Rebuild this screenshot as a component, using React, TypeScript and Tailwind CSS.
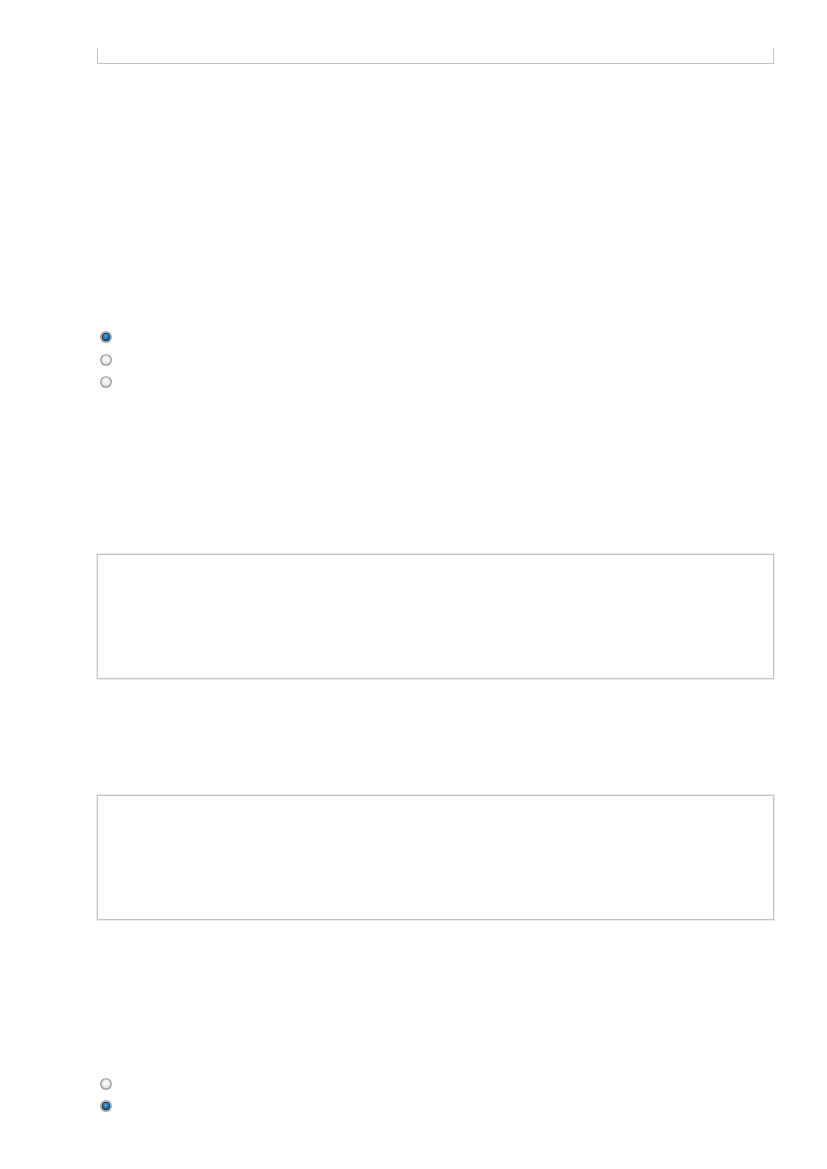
import React from 'react';

const Radio: React.FC<{ checked?: boolean }> = ({ checked }) => (
  <svg width="12" height="12" viewBox="0 0 12 12" className="block">
    <defs>
      <radialGradient id="rgOff" cx="50%" cy="40%" r="60%">
        <stop offset="0%" stopColor="#ffffff" />
        <stop offset="100%" stopColor="#d6d6d6" />
      </radialGradient>
      <radialGradient id="rgOn" cx="45%" cy="35%" r="60%">
        <stop offset="0%" stopColor="#4aa8e6" />
        <stop offset="100%" stopColor="#0a5b94" />
      </radialGradient>
    </defs>
    <circle cx="6" cy="6" r="5.3" fill="url(#rgOff)" stroke="#8e8e8e" strokeWidth="1.1" />
    {checked && <circle cx="6" cy="6" r="3.7" fill="url(#rgOn)" stroke="#0f3550" strokeWidth="1.1" />}
  </svg>
);

const Box: React.FC<{ className: string }> = ({ className }) => (
  <div className={`w-[677px] border border-[#c4c4c4] shadow-[0_0_0_1px_#ececec] ${className}`} />
);

export default function App() {
  return (
    <div className="w-[827px] min-h-[1169px] bg-white pl-[97px] flex flex-col">
      {/* tail of a box from the previous page */}
      <div className="mt-[48px] h-[16px] w-[677px] border-x border-b border-[#c4c4c4]" />

      <div className="mt-[267px] pl-[3px] flex flex-col gap-[10.5px]">
        <Radio checked />
        <Radio />
        <Radio />
      </div>

      <Box className="mt-[166px] h-[125px]" />
      <Box className="mt-[116px] h-[125px]" />

      <div className="mt-[158px] pl-[3px] flex flex-col gap-[10px]">
        <Radio />
        <Radio checked />
      </div>
    </div>
  );
}
